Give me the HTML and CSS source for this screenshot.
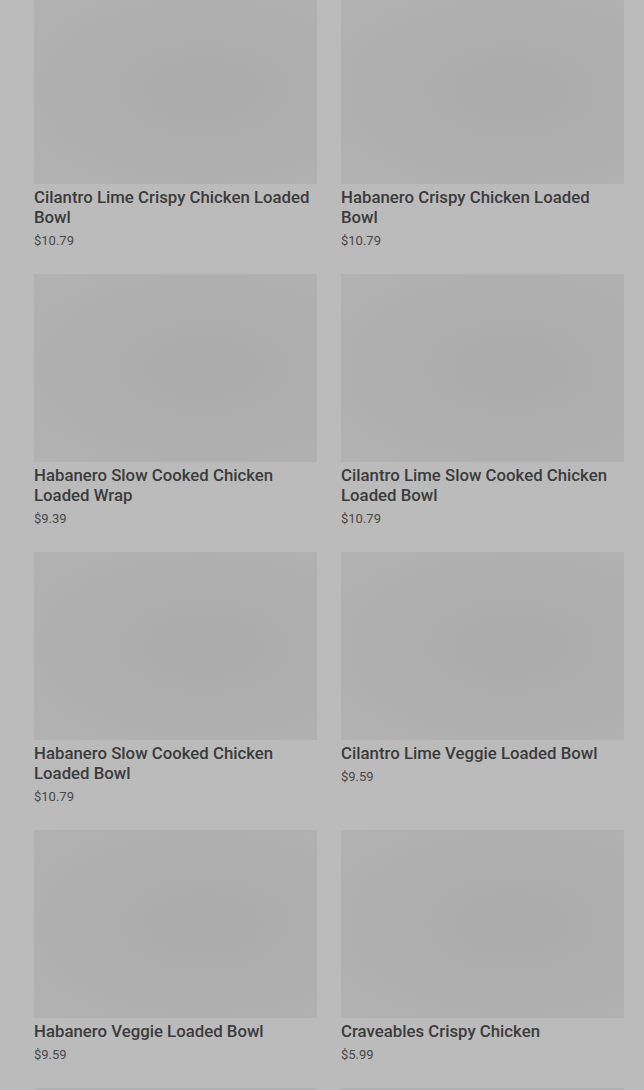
FILE: index.html
```html
<!DOCTYPE html>
<html>
<head>
<meta charset="utf-8">
<link rel="stylesheet" href="styles.css">
</head>
<body>
<div class="grid">
  <div class="card"><div class="img"></div><div class="title">Cilantro Lime Crispy Chicken Loaded Bowl</div><div class="price">$10.79</div></div>
  <div class="card"><div class="img"></div><div class="title">Habanero Crispy Chicken Loaded Bowl</div><div class="price">$10.79</div></div>
  <div class="card"><div class="img"></div><div class="title">Habanero Slow Cooked Chicken Loaded Wrap</div><div class="price">$9.39</div></div>
  <div class="card"><div class="img"></div><div class="title">Cilantro Lime Slow Cooked Chicken Loaded Bowl</div><div class="price">$10.79</div></div>
  <div class="card"><div class="img"></div><div class="title">Habanero Slow Cooked Chicken Loaded Bowl</div><div class="price">$10.79</div></div>
  <div class="card"><div class="img"></div><div class="title">Cilantro Lime Veggie Loaded Bowl</div><div class="price">$9.59</div></div>
  <div class="card"><div class="img"></div><div class="title">Habanero Veggie Loaded Bowl</div><div class="price">$9.59</div></div>
  <div class="card"><div class="img"></div><div class="title">Craveables Crispy Chicken</div><div class="price">$5.99</div></div>
  <div class="card"><div class="img"></div></div>
  <div class="card"><div class="img"></div></div>
</div>
</body>
</html>
```
FILE: styles.css
```css
html, body {
  margin: 0;
  padding: 0;
  background: #bbbbbb;
  overflow: hidden;
}
body {
  font-family: Roboto, "Liberation Sans", sans-serif;
}
.grid {
  display: grid;
  grid-template-columns: 283px 283px;
  column-gap: 24px;
  row-gap: 24px;
  padding: 0 20px 0 34px;
  margin-top: -4px;
  align-items: start;
}
.img {
  height: 188px;
  background: radial-gradient(ellipse at 60% 50%, #ababab 0%, #afafaf 60%, #b2b2b2 100%);
}
.title {
  margin-top: 3px;
  font-size: 16.8px;
  line-height: 20px;
  font-weight: 500;
  color: #3b3b3b;
}
.price {
  margin-top: 4px;
  font-size: 13px;
  line-height: 19px;
  color: #484848;
}
```
